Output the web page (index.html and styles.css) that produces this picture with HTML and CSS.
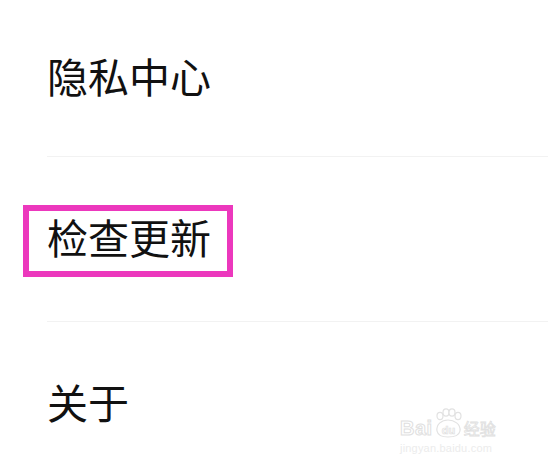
FILE: index.html
```html
<!DOCTYPE html>
<html lang="zh">
<head>
<meta charset="utf-8">
<link rel="stylesheet" href="styles.css">
</head>
<body>
<ul class="menu">
  <li class="item item-first"><span class="label">隐私中心</span></li>
  <li class="item"><span class="label highlight">检查更新</span></li>
  <li class="item item-last"><span class="label">关于</span></li>
</ul>
<div class="watermark">
  <div class="wm-logo">
    <span class="wm-bai">Bai</span>
    <span class="wm-paw">
      <svg width="32" height="30" viewBox="0 0 32 30">
        <g fill="#fff" stroke="#e2e2e2" stroke-width="1.2">
          <ellipse cx="8" cy="8" rx="3" ry="3.6"/>
          <ellipse cx="14" cy="4.5" rx="3" ry="3.6"/>
          <ellipse cx="20" cy="4.5" rx="3" ry="3.6"/>
          <ellipse cx="26" cy="8" rx="3" ry="3.6"/>
          <path d="M5 23 C4 16 10 12 16 12 C22 12 29 16 28 23 C27 28 22 29 16 29 C10 29 6 28 5 23 Z"/>
        </g>
        <text x="16.5" y="25.5" text-anchor="middle" class="wm-du">du</text>
      </svg>
    </span>
    <span class="wm-jy">经验</span>
  </div>
  <div class="wm-url">jingyan.baidu.com</div>
</div>
</body>
</html>
```
FILE: styles.css
```css
html, body {
  margin: 0;
  padding: 0;
  background: #ffffff;
  overflow: hidden;
}
body {
  width: 548px;
  height: 468px;
  position: relative;
  font-family: "Noto Sans CJK SC", "Noto Sans", sans-serif;
}
.menu {
  list-style: none;
  margin: 0;
  padding: 0 0 0 47px;
}
.item {
  display: flex;
  align-items: center;
  height: 164px;
  border-bottom: 1px solid #f2f2f2;
}
.item-first {
  height: 156px;
}
.item-last {
  border-bottom: none;
}
.label {
  font-size: 41px;
  line-height: 48px;
  color: #111111;
  margin-bottom: 7px;
}
.highlight {
  position: relative;
}
.highlight::after {
  content: "";
  position: absolute;
  left: -24px;
  right: -22px;
  top: -7px;
  bottom: -17px;
  border: 6px solid #ec38bd;
}
.watermark {
  position: absolute;
  left: 400px;
  top: 406px;
  width: 96px;
  font-family: "Liberation Sans", sans-serif;
}
.wm-logo {
  display: flex;
  align-items: flex-end;
  height: 32px;
}
.wm-bai {
  font-size: 20px;
  font-weight: bold;
  line-height: 20px;
  color: #ffffff;
  -webkit-text-stroke: 1px #e0e0e0;
  letter-spacing: 0.5px;
}
.wm-paw {
  display: block;
  height: 30px;
  margin-left: -1px;
}
.wm-du {
  font-family: "Liberation Sans", sans-serif;
  font-size: 11px;
  font-weight: bold;
  fill: #ffffff;
  stroke: #e0e0e0;
  stroke-width: 0.7;
}
.wm-jy {
  font-family: "Noto Sans CJK SC", sans-serif;
  font-size: 16px;
  line-height: 20px;
  color: #ffffff;
  -webkit-text-stroke: 0.8px #e0e0e0;
}
.wm-url {
  font-size: 11px;
  line-height: 14px;
  color: #ececec;
  margin-top: 3px;
  letter-spacing: 0.2px;
}
```
